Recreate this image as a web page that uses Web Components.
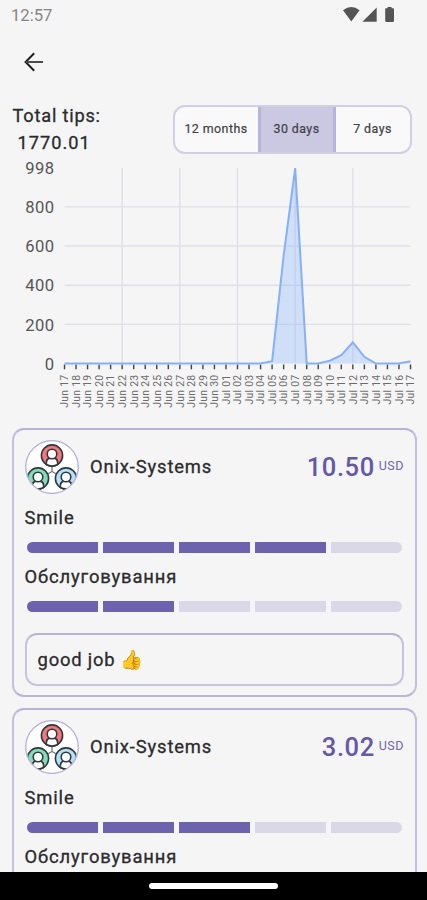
<!DOCTYPE html>
<html lang="en">
<head>
<meta charset="utf-8">
<title>Tips</title>
<style>
  body {
    margin: 0;
    height: 900px;
    overflow: hidden;
    background: #f5f5f5;
    font-family: Roboto, "Noto Sans", sans-serif;
    color: #2b2b2d;
  }
</style>
</head>
<body>
<tips-screen></tips-screen>

<script>
const render = (el, html) => {
  el.attachShadow({ mode: "open" });
  const template = document.createElement("template");
  template.innerHTML = html;
  el.shadowRoot.appendChild(template.content.cloneNode(true));
};

class StatusBar extends HTMLElement {
  constructor() {
    super();
    render(this, `
      <style>
        :host {
          display: flex;
          justify-content: space-between;
          height: 31px;
          padding: 0 30px 0 11px;
          color: #858585;
          font-size: 16.6px;
          line-height: 31px;
        }
        svg { display: block; }
      </style>
      <span><slot></slot></span>
      <svg width="54" height="31" fill="#555">
        <path d="M0 10.2Q8.3 4 16.6 10.2L8.3 21.5Z"/>
        <path d="M33.7 7.5V21.8H19.4Z"/>
        <path d="M44.6 7h4v1.3h1.6q.8 0 .8 .8v12q0 .8-.8 .8h-7.200q-.8 0-.8-.8V9.100q0-.8 .8-.8h1.600z"/>
      </svg>
    `);
  }
}

class AppBar extends HTMLElement {
  constructor() {
    super();
    render(this, `
      <style>
        :host { display: flex; align-items: center; height: 62px; padding-left: 24px; }
      </style>
      <svg width="20" height="20" fill="none" stroke="#1c1c1c" stroke-width="2">
        <path d="M10.2 1.3L1.6 10L10.2 18.7"/>
        <path d="M2 10H19" stroke="#4c4c4c"/>
      </svg>
    `);
  }
}

class PeriodPicker extends HTMLElement {
  constructor() {
    super();
    render(this, `
      <style>
        :host {
          display: flex;
          box-sizing: border-box;
          width: 239px;
          height: 49px;
          border: 2px solid #d1cfe6;
          border-radius: 12px;
          overflow: hidden;
          background: #f9f9fa;
          font-size: 12.4px;
          letter-spacing: 0.45px;
          -webkit-text-stroke: 0.2px;
          color: #414145;
        }
        span {
          box-sizing: border-box;
          display: flex;
          align-items: center;
          justify-content: center;
          width: 83px;
          padding-bottom: 2px;
        }
        .on {
          width: 78px;
          background: #cbc8e2;
          border: solid #b7b3da;
          border-width: 0 3px;
        }
        .last { width: 74px; }
      </style>
      <span>12 months</span><span class="on">30 days</span><span class="last">7 days</span>
    `);
  }
}

class TipsSummary extends HTMLElement {
  constructor() {
    super();
    render(this, `
      <style>
        :host {
          display: flex;
          justify-content: space-between;
          height: 55px;
          padding: 12px 15.5px 0 12.5px;
        }
        .total {
          margin-top: -3px;
          font-size: 18.2px;
          line-height: 27px;
          letter-spacing: 0.8px;
          -webkit-text-stroke: 0.3px;
        }
        .sum { padding-left: 5px; letter-spacing: 1px; }
      </style>
      <div class="total">
        <div>Total tips:</div>
        <div class="sum"><slot></slot></div>
      </div>
      <period-picker></period-picker>
    `);
  }
}

class TipsChart extends HTMLElement {
  constructor() {
    super();
    const values = Array(31).fill(0);
    Object.assign(values, { 18: 12, 19: 550, 20: 998, 23: 14, 24: 43, 25: 108, 26: 34, 30: 12 });

    const left = 64.5, right = 410.5, bottom = 203.5;
    const x = i => +(left + i * (right - left) / 30).toFixed(2);
    const y = v => +(bottom - v * 0.1958).toFixed(2);
    const day = i => i < 14 ? `Jun ${17 + i}` : `Jul ${String(i - 13).padStart(2, "0")}`;
    const line = values.map((v, i) => `${x(i)},${y(v)}`).join(" ");

    const rows = [200, 400, 600, 800].map(v =>
      `<path d="M${left} ${y(v)}H${right}"/>`).join("");
    const columns = [5, 10, 15, 20, 25].map(i =>
      `<path d="M${x(i)} 8V${bottom}"/>`).join("");
    const scale = [0, 200, 400, 600, 800, 998].map(v =>
      `<text x="54.5" y="${y(v) + 6.3}">${v}</text>`).join("");
    const ticks = values.map((v, i) =>
      `<path d="M${x(i)} 204.5v4.8"/>`).join("");
    const days = values.map((v, i) =>
      `<text transform="translate(${x(i) + 3.8} 214.5) rotate(-90)">${day(i)}</text>`).join("");

    render(this, `
      <style>
        :host { display: block; height: 268px; }
        svg { display: block; }
        .grid { stroke: #dfdfea; stroke-width: 1.4; }
        .scale { font-size: 16.6px; letter-spacing: 0.4px; fill: #555; text-anchor: end; }
        .days { font-size: 10.4px; letter-spacing: 0.3px; fill: #6c6c6c; text-anchor: end; }
        .ticks { stroke: #444; stroke-width: 1.4; }
      </style>
      <svg width="427" height="260">
        <g class="grid">${rows}${columns}</g>
        <polygon points="${left},${bottom} ${line} ${right},${bottom}" fill="#83b1ff" fill-opacity="0.32"/>
        <g class="ticks">${ticks}</g>
        <polyline points="${line}" fill="none" stroke="#86b0f8" stroke-width="2"/>
        <g class="scale">${scale}</g>
        <g class="days">${days}</g>
      </svg>
    `);
  }
}

class TeamAvatar extends HTMLElement {
  constructor() {
    super();
    const person = (cx, cy, fill) => `
      <g transform="translate(${cx} ${cy})" stroke="#33383c" stroke-width="1.6">
        <circle r="10.6" fill="${fill}"/>
        <path d="M-5.6 9V6.5Q-5.3 3.2 -2 2.4H2Q5.3 3.2 5.6 6.5V9Q0 12 -5.6 9Z" fill="#fff"/>
        <circle cy="-1.5" r="4.8" fill="#fff"/>
      </g>`;
    render(this, `
      <style>
        :host { display: block; width: 54px; height: 54px; }
        svg { display: block; }
      </style>
      <svg width="54" height="54">
        <defs><clipPath id="disc"><circle cx="27" cy="27" r="26"/></clipPath></defs>
        <circle cx="27" cy="27" r="26.3" fill="#fff"/>
        <g clip-path="url(#disc)">
          <path d="M27 25V32M21 35L27 31.5L33 35" fill="none" stroke="#777" stroke-width="1.3"/>
          ${person(27, 15.5, "#f0777c")}
          ${person(13, 38.5, "#83dcba")}
          ${person(41, 38.5, "#b2e1fa")}
        </g>
        <circle cx="27" cy="27" r="26.3" fill="none" stroke="#b2aed8" stroke-width="1.3"/>
      </svg>
    `);
  }
}

class RatingBar extends HTMLElement {
  constructor() {
    super();
    const value = Number(this.getAttribute("value"));
    const parts = [1, 2, 3, 4, 5].map(n => `<i class="${n <= value ? "on" : ""}"></i>`).join("");
    render(this, `
      <style>
        :host { display: block; height: 59.5px; }
        .label {
          height: 34px;
          font-size: 18.4px;
          line-height: 20px;
          letter-spacing: 0.85px;
          -webkit-text-stroke: 0.3px;
        }
        .bar {
          display: flex;
          gap: 4.5px;
          height: 11px;
          margin: 0 2px 0 2.5px;
          border-radius: 6px;
          overflow: hidden;
        }
        i { flex: 1; background: #dad8e7; }
        .on { background: #6c62ad; }
      </style>
      <div class="label"><slot></slot></div>
      <div class="bar">${parts}</div>
    `);
  }
}

class TipCard extends HTMLElement {
  constructor() {
    super();
    render(this, `
      <style>
        :host {
          display: block;
          box-sizing: border-box;
          flex: none;
          height: 269px;
          margin: 0 10px 11px 12px;
          padding: 10px 11px 0 10.5px;
          border: 2px solid #c3c0df;
          border-top-color: #b7b3d8;
          border-bottom-color: #b9b6d8;
          border-radius: 12px;
        }
        header { display: flex; align-items: center; height: 54px; margin-bottom: 13.5px; }
        .name {
          flex: 1;
          padding: 0 0 1px 11.5px;
          font-size: 18.4px;
          letter-spacing: 0.85px;
          -webkit-text-stroke: 0.3px;
        }
        .amount {
          font-size: 25.5px;
          font-weight: 500;
          letter-spacing: 0.6px;
          color: #6358ab;
        }
        .currency {
          align-self: flex-start;
          margin-top: 18px;
          padding-left: 4px;
          font-size: 12.5px;
          line-height: 16px;
          letter-spacing: 0.5px;
          color: #7066b2;
        }
      </style>
      <header>
        <team-avatar></team-avatar>
        <span class="name"><slot name="name"></slot></span>
        <span class="amount"><slot name="amount"></slot></span>
        <span class="currency">USD</span>
      </header>
      <slot></slot>
    `);
  }
}

class TipComment extends HTMLElement {
  constructor() {
    super();
    render(this, `
      <style>
        :host {
          display: flex;
          align-items: center;
          box-sizing: border-box;
          height: 53px;
          margin-top: 6.5px;
          padding-left: 11px;
          border: 2px solid #c6c3de;
          border-top-color: #b7b4d3;
          border-radius: 12px;
          font-family: Roboto, "Noto Color Emoji", sans-serif;
          font-size: 18.4px;
          letter-spacing: 0.8px;
          -webkit-text-stroke: 0.3px;
        }
      </style>
      <span><slot></slot></span>
    `);
  }
}

class NavBar extends HTMLElement {
  constructor() {
    super();
    render(this, `
      <style>
        :host {
          display: flex;
          flex: none;
          align-items: center;
          justify-content: center;
          height: 28px;
          background: #000;
        }
        div { width: 129px; height: 6px; border-radius: 3px; background: #fff; }
      </style>
      <div></div>
    `);
  }
}

class TipsScreen extends HTMLElement {
  constructor() {
    super();
    render(this, `
      <style>
        :host { display: flex; flex-direction: column; height: 900px; }
        main { flex: 1; min-height: 0; overflow: hidden; }
      </style>
      <main>
        <status-bar>12:57</status-bar>
        <app-bar></app-bar>
        <tips-summary>1770.01</tips-summary>
        <tips-chart></tips-chart>
        <tip-card>
          <span slot="name">Onix-Systems</span>
          <span slot="amount">10.50</span>
          <rating-bar value="4">Smile</rating-bar>
          <rating-bar value="2">Обслуговування</rating-bar>
          <tip-comment>good job 👍</tip-comment>
        </tip-card>
        <tip-card>
          <span slot="name">Onix-Systems</span>
          <span slot="amount">3.02</span>
          <rating-bar value="3">Smile</rating-bar>
          <rating-bar value="0">Обслуговування</rating-bar>
        </tip-card>
      </main>
      <nav-bar></nav-bar>
    `);
  }
}

customElements.define("status-bar", StatusBar);
customElements.define("app-bar", AppBar);
customElements.define("period-picker", PeriodPicker);
customElements.define("tips-summary", TipsSummary);
customElements.define("tips-chart", TipsChart);
customElements.define("team-avatar", TeamAvatar);
customElements.define("rating-bar", RatingBar);
customElements.define("tip-card", TipCard);
customElements.define("tip-comment", TipComment);
customElements.define("nav-bar", NavBar);
customElements.define("tips-screen", TipsScreen);
</script>
</body>
</html>
